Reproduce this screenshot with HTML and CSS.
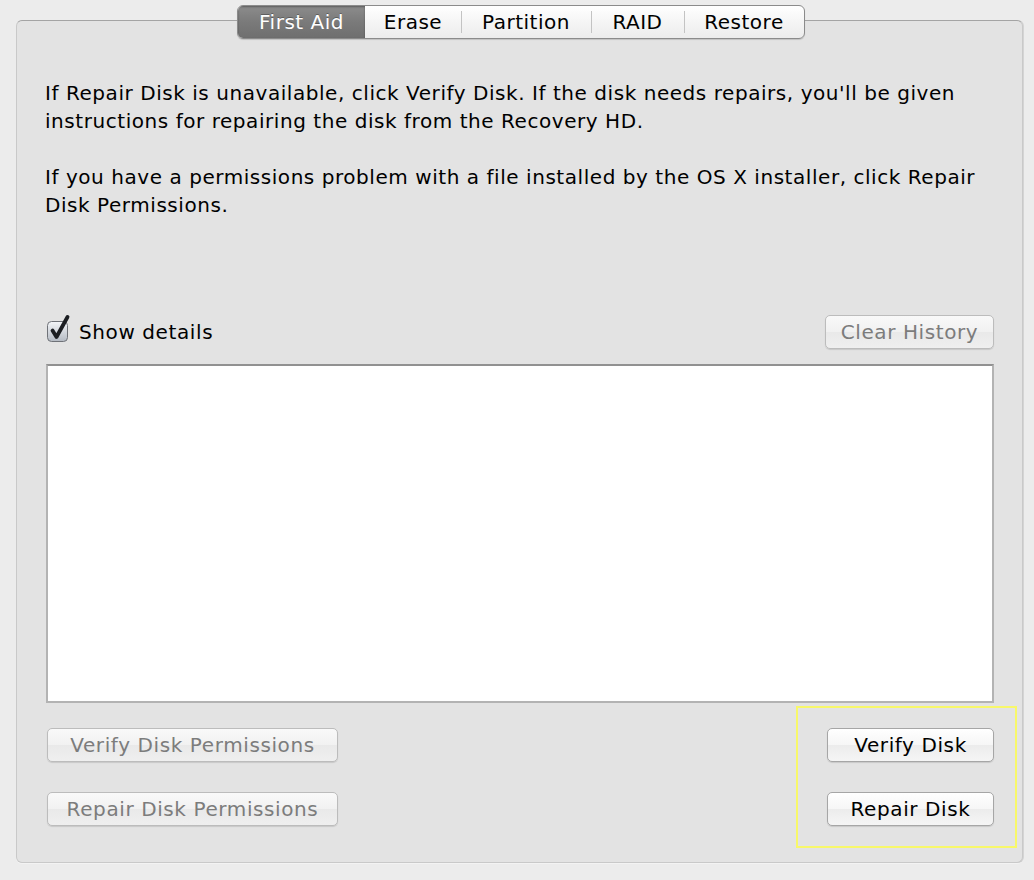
FILE: index.html
```html
<!DOCTYPE html>
<html>
<head>
<meta charset="utf-8">
<link rel="stylesheet" href="styles.css">
</head>
<body>
<div class="window">
  <div class="tabs">
    <div class="tab selected">First Aid</div>
    <div class="tab">Erase</div>
    <div class="tab">Partition</div>
    <div class="tab">RAID</div>
    <div class="tab">Restore</div>
  </div>
  <div class="panel">
    <p class="info">If Repair Disk is unavailable, click Verify Disk. If the disk needs repairs, you'll be given instructions for repairing the disk from the Recovery HD.</p>
    <p class="info">If you have a permissions problem with a file installed by the OS X installer, click Repair Disk Permissions.</p>
    <div class="details-row">
      <label class="check">
        <span class="box"><svg width="26" height="30" viewBox="0 0 26 30"><defs><linearGradient id="g" x1="0" y1="0" x2="0" y2="1"><stop offset="0" stop-color="#f4f6f9"/><stop offset="1" stop-color="#b4bac3"/></linearGradient></defs><rect x="1.5" y="8.5" width="20" height="20" rx="4" fill="url(#g)" stroke="#6f7278"/><path d="M6.5 17.5 L10.5 24 L21.5 4" fill="none" stroke="#1c1e22" stroke-width="3.8" stroke-linecap="round" stroke-linejoin="round"/></svg></span>
        <span class="check-label">Show details</span>
      </label>
      <button class="btn disabled clear">Clear History</button>
    </div>
    <div class="log"></div>
    <div class="actions">
      <div class="col">
        <button class="btn disabled wide">Verify Disk Permissions</button>
        <button class="btn disabled wide">Repair Disk Permissions</button>
      </div>
      <div class="col">
        <button class="btn narrow">Verify Disk</button>
        <button class="btn narrow">Repair Disk</button>
      </div>
    </div>
  </div>
  <div class="highlight"></div>
</div>
</body>
</html>
```

FILE: styles.css
```css
html, body {
  margin: 0;
  padding: 0;
}
body {
  background: #ececec;
  font-family: "DejaVu Sans", "Liberation Sans", sans-serif;
  color: #000;
  width: 1034px;
  height: 880px;
  overflow: hidden;
}
.window {
  position: relative;
  padding: 5px 10px 0 16px;
  display: flex;
  flex-direction: column;
}
.tabs {
  position: relative;
  z-index: 2;
  align-self: flex-start;
  margin-left: 221px;
  display: flex;
  height: 32px;
  border: 1px solid #8b8b8b;
  border-radius: 6px;
  background: linear-gradient(#ffffff, #f3f3f3 60%, #ececec);
  box-shadow: 0 1px 1px rgba(0,0,0,0.15);
  overflow: hidden;
}
.tab {
  position: relative;
  display: flex;
  align-items: center;
  justify-content: center;
  font-size: 20px;
  letter-spacing: 0.5px;
  color: #000;
}
.tab + .tab::before {
  content: "";
  position: absolute;
  left: 0;
  top: 5px;
  bottom: 5px;
  width: 1px;
  background: #c3c3c3;
}
.tab:nth-child(1) { width: 127px; }
.tab:nth-child(2) { width: 96px; }
.tab:nth-child(3) { width: 130px; }
.tab:nth-child(4) { width: 93px; }
.tab:nth-child(5) { width: 120px; }
.tab.selected {
  background: linear-gradient(#8c8c8c, #7a7a7a 50%, #6f6f6f);
  color: #fff;
  text-shadow: 0 -1px 0 rgba(0,0,0,0.3);
  box-shadow: inset 0 1px 2px rgba(0,0,0,0.35);
}
.tab.selected + .tab::before { display: none; }
.panel {
  margin-top: -19px;
  width: 1007px;
  height: 843px;
  box-sizing: border-box;
  background: #e3e3e3;
  border: 1px solid #c9c9c9;
  border-top-color: #a4a4a4;
  border-radius: 6px;
  box-shadow: 1px 0 0 #d4d4d4, 0 1px 0 #f3f3f3;
  padding: 58px 28px 0 28px;
  display: flex;
  flex-direction: column;
}
.info {
  margin: 0 0 28px;
  font-size: 20px;
  line-height: 28px;
  letter-spacing: 0.55px;
}
.info + .info { margin-bottom: 0; }
.details-row {
  margin-top: 96px;
  height: 33px;
  display: flex;
  align-items: center;
  justify-content: space-between;
}
.check {
  display: flex;
  align-items: center;
  margin-left: 1px;
}
.box {
  display: block;
  width: 26px;
  height: 30px;
  margin-top: -8px;
}
.check-label {
  margin-left: 7px;
  font-size: 20px;
  letter-spacing: 0.6px;
}
.btn {
  font-family: inherit;
  font-size: 20px;
  letter-spacing: 0.6px;
  height: 34px;
  padding: 0;
  border: 1px solid #a6a6a6;
  border-radius: 5px;
  background: linear-gradient(#ffffff, #f6f6f6 50%, #ececec 51%, #f5f5f5);
  box-shadow: 0 1px 1px rgba(0,0,0,0.12);
  color: #000;
}
.btn.disabled {
  color: #7c7c7c;
  border-color: #bcbcbc;
  background: linear-gradient(#f9f9f9, #f1f1f1 50%, #e9e9e9 51%, #efefef);
}
.clear { width: 169px; }
.log {
  margin-top: 16px;
  height: 339px;
  background: #fff;
  border: 2px solid #b3b3b3;
  border-top-color: #919191;
  box-sizing: border-box;
  margin-left: 1px;
}
.actions {
  margin-top: 25px;
  display: flex;
  justify-content: space-between;
}
.col {
  display: flex;
  flex-direction: column;
  gap: 30px;
}
.wide { width: 291px; margin-left: 2px; }
.narrow { width: 167px; }
.highlight {
  position: absolute;
  left: 796px;
  top: 706px;
  width: 217px;
  height: 138px;
  border: 2px solid #f8f86a;
}
```
